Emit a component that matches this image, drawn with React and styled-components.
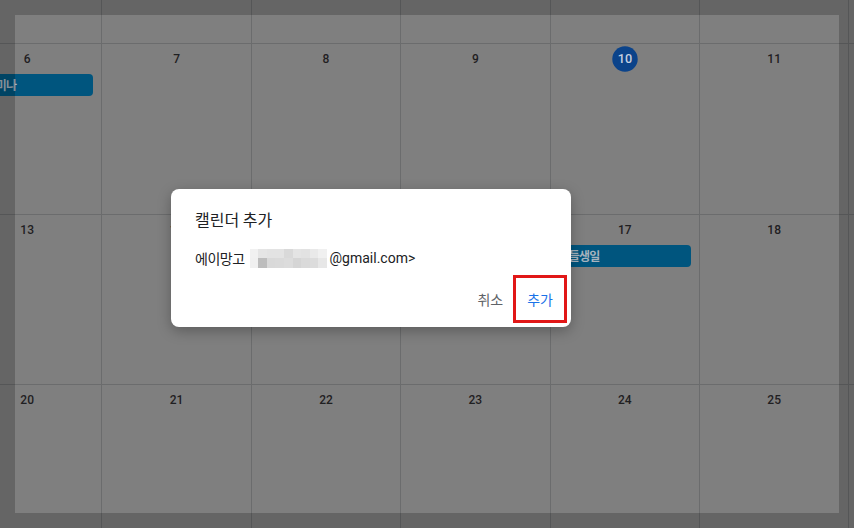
import React from "react";
import styled, { createGlobalStyle } from "styled-components";

const GlobalStyle = createGlobalStyle`
  html, body {
    margin: 0;
    padding: 0;
    width: 854px;
    height: 528px;
    overflow: hidden;
    background: #7f7f7f;
  }
  body {
    font-family: Roboto, "Noto Sans CJK KR", "Noto Sans", sans-serif;
  }
`;

const Page = styled.div`
  position: relative;
  width: 854px;
  height: 528px;
  overflow: hidden;
  background: #7f7f7f;
`;

/* calendar drawn in its dimmed (behind-the-scrim) palette */
const MonthGrid = styled.div`
  display: grid;
  grid-template-columns: repeat(7, 149.4px);
  grid-template-rows: repeat(4, 170.5px);
  margin: -127.5px 0 0 -48px;
`;

const DayCell = styled.div`
  box-sizing: border-box;
  border-left: 1px solid #6b6c6d;
  border-top: 1px solid #6b6c6d;
  display: flex;
  flex-direction: column;
  align-items: center;
  padding-top: 3px;
  min-width: 0;
`;

const DateLabel = styled.div`
  width: 24px;
  height: 24px;
  border-radius: 50%;
  display: flex;
  align-items: center;
  justify-content: center;
  font-size: 12px;
  font-weight: 500;
  color: ${(p) => (p.$today ? "#c4cfe0" : "#1f2022")};
  background: ${(p) => (p.$today ? "#0b438a" : "transparent")};
  transform: ${(p) => (p.$today ? "scale(1.06)" : "none")};
`;

const EventBar = styled.div`
  align-self: stretch;
  margin: 3px 8px 0 0;
  height: 22px;
  border-radius: 4px;
  background: #00557e;
  color: #a6b3be;
  font-family: "Noto Sans CJK KR", Roboto, sans-serif;
  font-size: 12px;
  font-weight: 700;
  letter-spacing: -0.8px;
  line-height: 22px;
  padding-left: ${(p) => p.$pad || 8}px;
  white-space: nowrap;
  overflow: hidden;
`;

/* darker band from the screenshot selection frame */
const SelectionFrame = styled.div`
  position: absolute;
  left: 15px;
  top: 15px;
  width: 824px;
  height: 498px;
  box-shadow: 0 0 0 600px rgba(0, 0, 0, 0.2);
  pointer-events: none;
`;

const Dialog = styled.div`
  position: absolute;
  left: 171px;
  top: 189px;
  width: 400px;
  box-sizing: border-box;
  background: #fff;
  border-radius: 8px;
  box-shadow: 0 4px 14px rgba(0, 0, 0, 0.28);
  padding: 18px 10px 10px 24px;
  display: flex;
  flex-direction: column;
`;

const DialogTitle = styled.div`
  font-family: "Noto Sans CJK KR", Roboto, sans-serif;
  font-size: 16px;
  line-height: 24px;
  color: #202124;
`;

const DialogBody = styled.div`
  margin-top: 17px;
  display: flex;
  align-items: center;
  height: 20px;
  font-size: 14px;
  color: #202124;
`;

const KoreanName = styled.span`
  font-family: "Noto Sans CJK KR", sans-serif;
  letter-spacing: -0.5px;
  margin-right: 5px;
`;

const Mosaic = styled.span`
  display: inline-grid;
  grid-template-columns: repeat(9, 8.6px);
  grid-template-rows: 9px 10px;
  width: 77px;
  margin-right: 3px;
`;

const MosaicTile = styled.span`
  background: ${(p) => p.$c};
`;

const EmailText = styled.span`
  font-family: Roboto, sans-serif;
`;

const Actions = styled.div`
  margin-top: 13px;
  display: flex;
  justify-content: flex-end;
  gap: 8px;
`;

const TextButton = styled.button`
  height: 36px;
  padding: 0 8px;
  border: none;
  background: transparent;
  border-radius: ${(p) => (p.$marked ? "0" : "4px")};
  font-family: "Noto Sans CJK KR", Roboto, sans-serif;
  font-size: 14px;
  color: ${(p) => (p.$primary ? "#1a73e8" : "#5f6368")};
  outline: ${(p) => (p.$marked ? "3px solid #e11717" : "none")};
  outline-offset: 3px;
  cursor: pointer;
`;

/* null = a day cell scrolled out of view (only its grid lines show) */
const weeks = [
  [null, null, null, null, null, null, null],
  [6, 7, 8, 9, 10, 11, null],
  [13, 14, 15, 16, 17, 18, null],
  [20, 21, 22, 23, 24, 25, null],
];

const events = {
  6: { title: "주간 세미나", pad: 10 },
  17: { title: "아들생일", pad: 8 },
};

const mosaicColors = [
  "#f1f1f1", "#e5e5e5", "#e3e3e3", "#e3e3e3", "#d9d9d9", "#e4e4e4", "#e2e2e2", "#e9e9e9", "#f0f0f0",
  "#f0f0f0", "#bdbdbd", "#d9d9d9", "#dadada", "#dcdcdc", "#d5d5d5", "#dadada", "#dcdcdc", "#e7e7e7",
];

export default function App() {
  return (
    <Page>
      <GlobalStyle />
      <MonthGrid>
        {weeks.map((week, wi) =>
          week.map((d, di) => (
            <DayCell key={`${wi}-${di}`}>
              {d !== null && <DateLabel $today={d === 10}>{d}</DateLabel>}
              {d !== null && events[d] && (
                <EventBar $pad={events[d].pad}>{events[d].title}</EventBar>
              )}
            </DayCell>
          ))
        )}
      </MonthGrid>
      <SelectionFrame />
      <Dialog>
        <DialogTitle>캘린더 추가</DialogTitle>
        <DialogBody>
          <KoreanName>에이망고</KoreanName>
          <Mosaic>
            {mosaicColors.map((c, i) => (
              <MosaicTile key={i} $c={c} />
            ))}
          </Mosaic>
          <EmailText>@gmail.com&gt;</EmailText>
        </DialogBody>
        <Actions>
          <TextButton>취소</TextButton>
          <TextButton $primary $marked>추가</TextButton>
        </Actions>
      </Dialog>
    </Page>
  );
}
